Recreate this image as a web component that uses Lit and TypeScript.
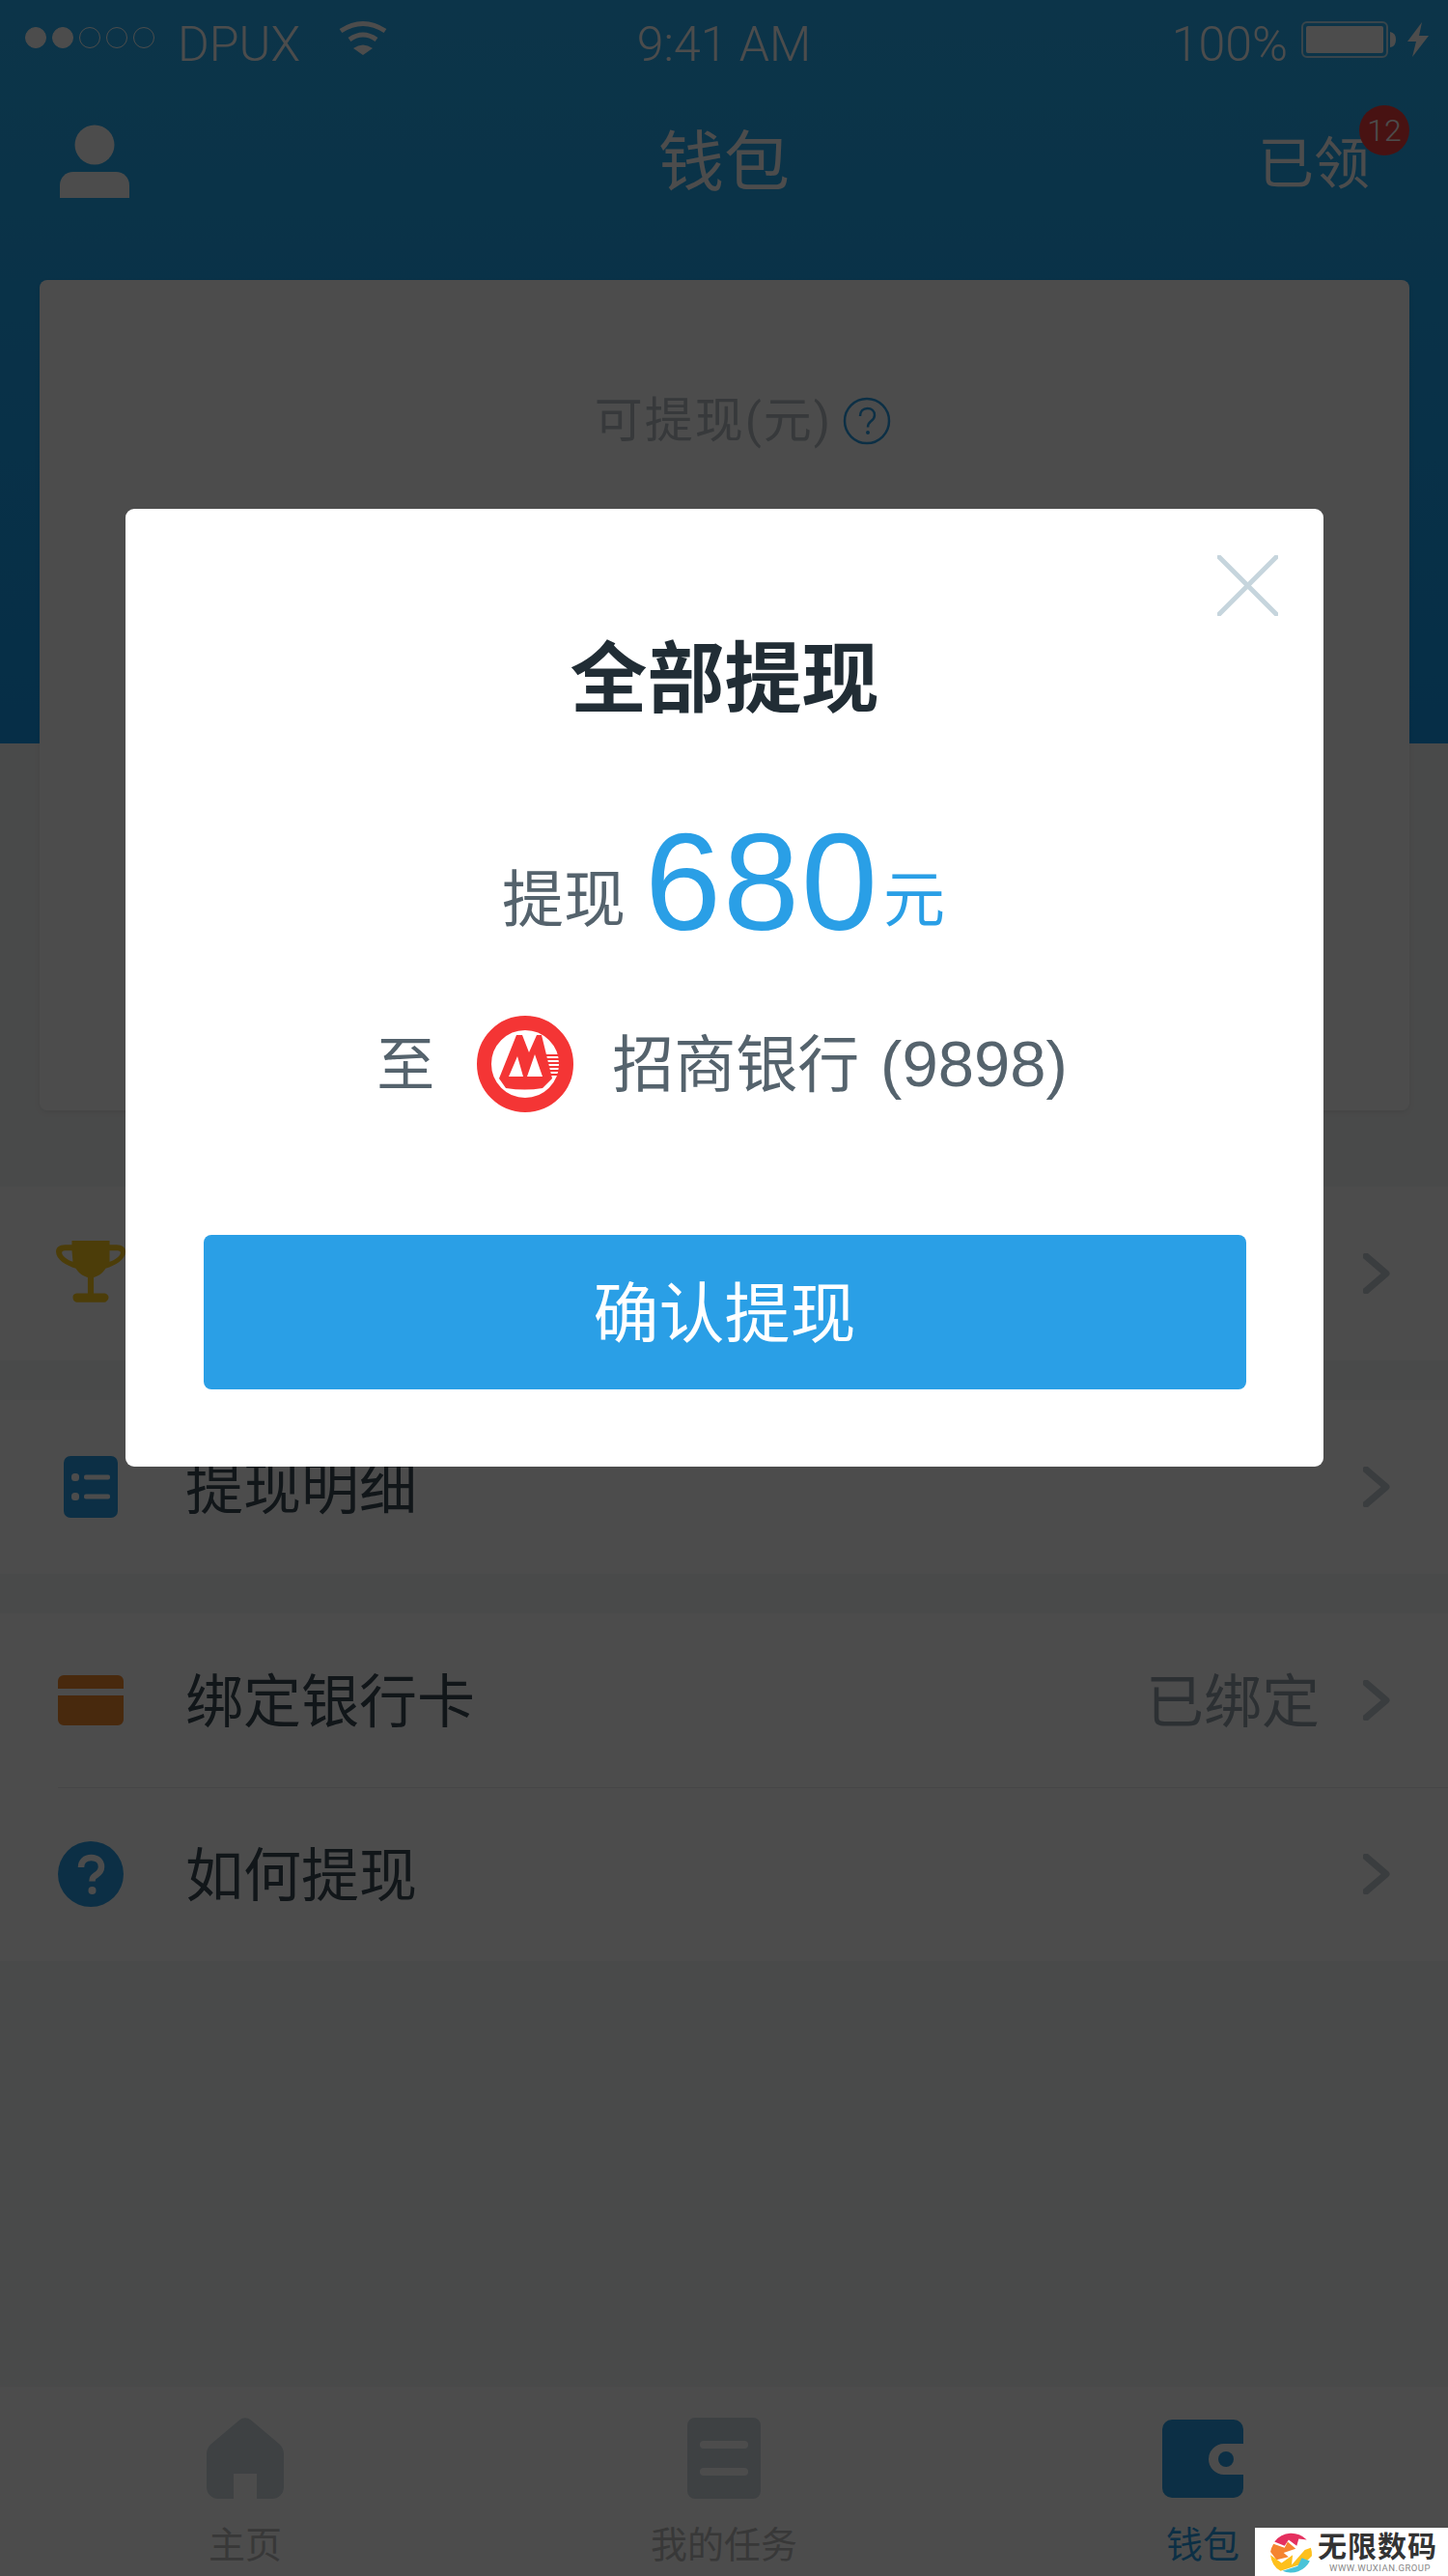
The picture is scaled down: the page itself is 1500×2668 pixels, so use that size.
import { LitElement, html, css } from "lit";
import { customElement } from "lit/decorators.js";

const chevron = html`<svg class="chev" viewBox="0 0 28 42"><path d="M3 3 L24 21 L3 39" fill="none" stroke="#c3ccd3" stroke-width="7" stroke-linejoin="round" stroke-linecap="round"/></svg>`;

const rowIcons = {
  trophy: html`<svg class="ri-trophy" viewBox="1 2 70 66"><path d="M17 2h38v4h7c6 0 9 3 9 7 0 8-10 14-20 17-3 5-8 8-12 9v16h10c3 0 5 2 5 4s-2 5-5 5H23c-3 0-5-2-5-5s2-4 5-4h10V39c-4-1-9-4-12-9C11 27 1 21 1 13c0-4 3-7 9-7h7z M17 12h-7c-2 0-3 1-3 2 0 3 5 7 11 9z M55 12v11c6-2 11-6 11-9 0-1-1-2-3-2z" fill="#ffcc1f" fill-rule="evenodd"/></svg>`,
  list: html`<svg class="ri-list" viewBox="0 0 56 64"><rect width="56" height="64" rx="7" fill="#2a9fe6"/><rect x="8" y="18" width="8" height="8" rx="3.5" fill="#fff"/><rect x="8" y="38" width="8" height="8" rx="3.5" fill="#fff"/><rect x="21" y="19.5" width="27" height="5" rx="2" fill="#fff"/><rect x="21" y="39.5" width="27" height="5" rx="2" fill="#fff"/></svg>`,
  card: html`<svg class="ri-card" viewBox="0 0 68 52"><path d="M6 0h56a6 6 0 0 1 6 6v8H0V6a6 6 0 0 1 6-6z M0 21h68v25a6 6 0 0 1-6 6H6a6 6 0 0 1-6-6z" fill="#f28a2e"/></svg>`,
  help: html`<svg class="ri-help" viewBox="0 0 68 68"><circle cx="34" cy="34" r="34" fill="#2a9fe6"/><path d="M24 27c0-6 4-10 10.5-10S45 21 45 26.5c0 4.500-2.500 6.500-5.500 8.500-3 2-4 3-4 6.500" fill="none" stroke="#fff" stroke-width="6.5"/><circle cx="35.5" cy="51" r="4" fill="#fff"/></svg>`,
};

const cmbLogo = html`<svg class="cmb" viewBox="0 0 100 100">
  <circle cx="50" cy="50" r="42.5" fill="none" stroke="#f43535" stroke-width="15"/>
  <path d="M23 65 L41 20 L47 20 L54 38 L62 20 L67 20 L78 65 L68 75 Q50 78 30 75 Z M33 63 L48 63 L42 42 Z M52 63 L68 63 L60 40 Z" fill="#f43535" fill-rule="evenodd"/>
  <path d="M70 41h15M71 45h14.500M72 49h13.500M73 53h12.500M74 57h11M75 61h9" stroke="#f43535" stroke-width="1.8" fill="none"/>
</svg>`;

const wmLogo = html`<svg class="wmlogo" viewBox="0 0 44 44">
  <path d="M6 12 A21 21 0 0 1 38 10 L30 9 L28 16 L20 10 L16 16z" fill="#e5305f"/>
  <path d="M2 22 A21 21 0 0 1 5 14 L16 18 L19 12 L27 19 L15 23 L20 27 L8 30z" fill="#f58430" />
  <path d="M2 25 L13 33 L24 25 L23 35 L36 20 L42 18 A21 21 0 0 1 43 26 L36 33 L12 41 A21 21 0 0 1 2 25z" fill="#fec01c"/>
  <path d="M14 41 L29 36 L33 28 L41 31 A21 21 0 0 1 14 41z" fill="#4ac3d8"/>
</svg>`;

@customElement("app-root")
export class AppRoot extends LitElement {
  static styles = css`
    :host { display: block; width: 1500px; height: 2668px; font-family: "Roboto", "Noto Sans CJK SC", sans-serif; font-weight: 300; }
    * { box-sizing: border-box; }
    .page { position: relative; width: 1500px; height: 2668px; background: #f6f7f7; overflow: hidden; display: flex; flex-direction: column; }
    .hero { height: 770px; flex: none; background: linear-gradient(180deg, #29b0f3 0%, #149bee 100%); display: flex; flex-direction: column; }
    .status { height: 92px; flex: none; display: grid; grid-template-columns: 1fr auto 1fr; align-items: center; color: #fff; font-size: 50px; padding: 0 20px; }
    .s-left, .s-right { display: flex; align-items: center; }
    .s-right { justify-content: flex-end; }
    .dots { display: flex; gap: 6px; width: 158px; flex: none; margin: 0 0 14px 6px; }
    .dot { width: 22px; height: 22px; border-radius: 50%; border: 1.5px solid #fff; flex: none; }
    .dot.on { background: #fff; }
    .carrier { width: 166px; flex: none; }
    .wifi { width: 52px; height: 36px; flex: none; margin-bottom: 14px; }
    .pct { margin-right: 14px; }
    .batt { width: 98px; height: 38px; flex: none; margin-bottom: 11px; }
    .bolt { width: 22px; height: 36px; flex: none; margin: 0 0 11px 12px; }
    .nav { height: 198px; flex: none; display: grid; grid-template-columns: 1fr auto 1fr; align-items: center; color: #fff; padding: 0 81px 48px; }
    .user { width: 72px; height: 76px; display: block; margin-left: -19px; }
    .nav-title { font-size: 68px; line-height: 80px; font-weight: 400; padding-top: 3px; }
    .nav-right { font-size: 58px; position: relative; line-height: 70px; justify-self: end; font-weight: 400; padding-top: 5px; }
    .badge { position: absolute; left: 105px; top: -21px; width: 52px; height: 52px; border-radius: 50%; background: #f23f3f; color: #fff; font-size: 32px; line-height: 52px; text-align: center; font-weight: 300; }
    .panel { width: 1419px; height: 860px; margin-left: 41px; flex: none; background: #fff; border-radius: 8px; padding: 115px 0 0 38px; box-shadow: 0 2px 6px rgba(0,0,0,.08); display: flex; justify-content: center; }
    .panel-label { display: flex; align-items: center; gap: 11px; color: #b8c0c6; font-size: 50px; line-height: 62px; height: 62px; letter-spacing: 2px; font-weight: 400; }
    .qm { width: 50px; height: 50px; }
    .menu { flex: none; margin-top: 459px; display: flex; flex-direction: column; font-weight: 400; }
    .group { background: #fff; }
    .group + .group { margin-top: 41px; }
    .row { height: 180px; display: flex; align-items: center; position: relative; }
    .row + .row::before { content: ""; position: absolute; left: 60px; right: 0; top: 0; height: 1px; background: #e9ecee; }
    .ri-box { width: 72px; margin-left: 58px; margin-right: 62px; display: flex; justify-content: center; flex: none; }
    .ri-trophy { width: 72px; height: 68px; display: block; }
    .ri-list { width: 56px; height: 64px; display: block; }
    .ri-card { width: 68px; height: 52px; display: block; }
    .ri-help { width: 68px; height: 68px; display: block; }
    .row-label { font-size: 60px; color: #3a4a56; flex: 1; line-height: 70px; padding-top: 6px; }
    .row-value { font-size: 60px; color: #94a1ab; margin-right: 45px; line-height: 70px; padding-top: 6px; }
    .chev { width: 28px; height: 42px; margin-right: 60px; flex: none; }
    .tabs { position: absolute; left: 0; right: 0; bottom: 0; height: 196px; background: #fff; display: grid; grid-template-columns: 508px 484px 508px; font-weight: 400; }
    .tab { display: flex; flex-direction: column; align-items: center; padding-top: 32px; }
    .tab-ic { height: 84px; display: flex; align-items: center; }
    .ic-home { width: 80px; height: 84px; display: block; }
    .ic-task { width: 76px; height: 84px; display: block; }
    .ic-wallet { width: 84px; height: 81px; display: block; }
    .tab span { margin-top: 24px; line-height: 48px; font-size: 38px; color: #bcbcbc; }
    .tab.active span { color: #2a9fe6; }
    .watermark { position: absolute; right: 0; bottom: 0; width: 200px; height: 50px; background: #fff; z-index: 5; display: flex; padding-left: 14px; align-items: center; gap: 5px; font-weight: 400; }
    .wmlogo { width: 46px; height: 46px; flex: none; }
    .wmtext { display: flex; flex-direction: column; }
    .wm1 { font-size: 30px; line-height: 33px; font-weight: 700; color: #333; letter-spacing: 1px; white-space: nowrap; }
    .wm2 { font-size: 9.5px; line-height: 12px; color: #888; letter-spacing: .5px; padding-left: 12px; white-space: nowrap; }
    .overlay { position: absolute; inset: 0; background: rgba(0,0,0,.7); z-index: 3; }
    .modal { position: absolute; left: 130px; top: 527px; width: 1241px; height: 992px; background: #fff; border-radius: 9px; z-index: 4; display: flex; flex-direction: column; align-items: center; padding-top: 129px; }
    .close { position: absolute; left: 1131px; top: 48px; width: 63px; height: 63px; }
    .m-title { font-size: 80px; font-weight: 700; color: #212d35; line-height: 96px; }
    .amount { display: flex; align-items: flex-start; color: #55636d; font-size: 64px; margin-top: 83px; line-height: 150px; height: 150px; margin-left: -2px; font-weight: 400; }
    .amount span, .amount i { margin-top: 23px; }
    .amount b { font-family: "Liberation Sans", sans-serif; font-weight: 400; font-size: 142px; letter-spacing: 2px; color: #2a9fe6; margin: 4px 4px 0 20px; }
    .amount i { font-style: normal; color: #2a9fe6; }
    .bank { display: flex; align-items: center; color: #55636d; font-size: 64px; height: 100px; margin-top: 67px; margin-left: -5px; font-weight: 400; }
    .bank .to { font-size: 60px; padding-bottom: 10px; }
    .bank .acct { padding-bottom: 10px; }
    .bank .num { font-family: "Liberation Sans", sans-serif; font-size: 67px; margin-left: 6px; }
    .cmb { width: 100px; height: 100px; margin: 0 40px 0 44px; flex: none; }
    .btn { width: 1080px; height: 160px; margin-top: 127px; padding-bottom: 8px; background: #2a9fe6; color: #fff; border-radius: 8px; font-size: 68px; font-weight: 400; display: flex; align-items: center; justify-content: center; flex: none; }
  `;

  render() {
    return html`<div class="page">
      <div class="hero">
        <div class="status">
          <div class="s-left">
            <div class="dots">
              <div class="dot on"></div><div class="dot on"></div><div class="dot"></div><div class="dot"></div><div class="dot"></div>
            </div>
            <span class="carrier">DPUX</span>
            <svg class="wifi" viewBox="0 0 52 36"><path d="M3 11 Q26 -4 49 11 M12 20 Q26 10 40 20" fill="none" stroke="#fff" stroke-width="5"/><path d="M16 29 Q26 22 36 29 L26 36 Z" fill="#fff"/></svg>
          </div>
          <span>9:41 AM</span>
          <div class="s-right">
            <span class="pct">100%</span>
            <svg class="batt" viewBox="0 0 98 38"><rect x="1" y="1" width="88" height="36" rx="5" fill="none" stroke="#fff" stroke-opacity=".7" stroke-width="2"/><rect x="5" y="5" width="80" height="28" rx="2" fill="#fff"/><path d="M92 11 q6 1 6 8 t-6 8z" fill="#fff"/></svg>
            <svg class="bolt" viewBox="0 0 22 36"><path d="M15 0 L0 20 H9 L5 36 L22 14 H12 Z" fill="#fff"/></svg>
          </div>
        </div>
        <div class="nav">
          <svg class="user" viewBox="0 0 72 76"><circle cx="36" cy="21" r="20.5" fill="#fff"/><path d="M14 49h44c8 0 14 6 14 14v13H0V63c0-8 6-14 14-14z" fill="#fff"/></svg>
          <div class="nav-title">钱包</div>
          <div class="nav-right">已领<span class="badge">12</span></div>
        </div>
        <div class="panel">
          <div class="panel-label">可提现(元)
            <svg class="qm" viewBox="0 0 50 50"><circle cx="25" cy="25" r="23" fill="none" stroke="#2a9fe6" stroke-width="2.5"/><path d="M18 20c0-5 3-8 7.500-8s7.500 3 7.500 7c0 3-2 5-4 6.500s-3 3-3 6" fill="none" stroke="#2a9fe6" stroke-width="2.5"/><circle cx="26" cy="37" r="2" fill="#2a9fe6"/></svg>
          </div>
        </div>
      </div>
      <div class="menu">
        <div class="group">
          <div class="row"><div class="ri-box">${rowIcons.trophy}</div><div class="row-label">我的奖杯</div>${chevron}</div>
        </div>
        <div class="group">
          <div class="row"><div class="ri-box">${rowIcons.list}</div><div class="row-label">提现明细</div>${chevron}</div>
        </div>
        <div class="group">
          <div class="row"><div class="ri-box">${rowIcons.card}</div><div class="row-label">绑定银行卡</div><div class="row-value">已绑定</div>${chevron}</div>
          <div class="row"><div class="ri-box">${rowIcons.help}</div><div class="row-label">如何提现</div>${chevron}</div>
        </div>
      </div>
      <div class="tabs">
        <div class="tab">
          <div class="tab-ic"><svg class="ic-home" viewBox="0 0 80 84"><path d="M34 2.500 a9 9 0 0 1 12 0 L75 27 a14 14 0 0 1 5 10 V72 a12 12 0 0 1-12 12 H52 V58 H28 V84 H12 a12 12 0 0 1-12-12 V37 a14 14 0 0 1 5-10 Z" fill="#cfd9e1"/></svg></div>
          <span>主页</span>
        </div>
        <div class="tab">
          <div class="tab-ic"><svg class="ic-task" viewBox="0 0 76 84"><path d="M8 0h60a8 8 0 0 1 8 8v68a8 8 0 0 1-8 8H8a8 8 0 0 1-8-8V8a8 8 0 0 1 8-8z M17 24a3 3 0 0 0 0 8h42a3 3 0 0 0 0-8z M17 52a3 3 0 0 0 0 8h42a3 3 0 0 0 0-8z" fill="#cfd9e1" fill-rule="evenodd"/></svg></div>
          <span>我的任务</span>
        </div>
        <div class="tab active">
          <div class="tab-ic"><svg class="ic-wallet" viewBox="0 0 84 81"><path d="M10 0h64a10 10 0 0 1 10 10v15H64a16 16 0 0 0 0 32h20v14a10 10 0 0 1-10 10H10a10 10 0 0 1-10-10V10a10 10 0 0 1 10-10z" fill="#2a9fe6"/><circle cx="66" cy="41" r="8" fill="#2a9fe6"/></svg></div>
          <span>钱包</span>
        </div>
      </div>
      <div class="overlay"></div>
      <div class="modal">
        <svg class="close" viewBox="0 0 63 63"><path d="M2 2 L61 61 M61 2 L2 61" stroke="#c6d5dd" stroke-width="5" stroke-linecap="round" fill="none"/></svg>
        <div class="m-title">全部提现</div>
        <div class="amount"><span>提现</span><b>680</b><i>元</i></div>
        <div class="bank"><span class="to">至</span>${cmbLogo}<span class="acct">招商银行 <span class="num">(9898)</span></span></div>
        <div class="btn">确认提现</div>
      </div>
      <div class="watermark">${wmLogo}<div class="wmtext"><div class="wm1">无限数码</div><div class="wm2">WWW.WUXIAN.GROUP</div></div></div>
    </div>`;
  }
}
